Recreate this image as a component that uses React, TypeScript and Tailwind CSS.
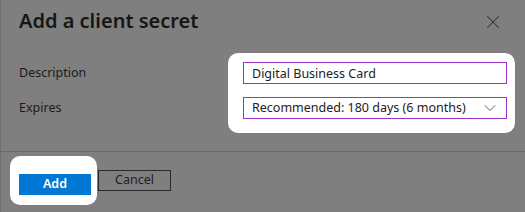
import { X, ChevronDown } from 'lucide-react';

export default function App() {
  return (
    <div
      className="w-[525px] h-[212px] overflow-hidden bg-[#7f7f7f] border-l border-[#6f6f6f] text-[#1b1b1b]"
      style={{ fontFamily: '"Noto Sans", "Open Sans", sans-serif' }}
    >
      <div className="flex items-start justify-between pl-[18px] pr-[21px] pt-[7px]">
        <h2 className="text-[20px] leading-[28px] font-semibold text-[#161616]">Add a client secret</h2>
        <button className="mt-[4px] text-[#333]" aria-label="Close">
          <X size={22} strokeWidth={1.1} />
        </button>
      </div>

      <div className="mt-[27px] grid grid-cols-[224px_264px] gap-y-[13px] pl-[18px]">
        <label className="flex h-[22px] items-center text-[12.5px]">Description</label>
        <div className="relative row-span-2 flex flex-col gap-[13px]">
          <div className="absolute -left-[15px] -right-[8px] -top-[9px] -bottom-[14px] rounded-[10px] bg-white" />
          <input
            readOnly
            value="Digital Business Card"
            className="relative h-[22px] w-full border border-[#9a32c8] bg-white px-[8px] text-[12.5px] text-[#222] outline-none"
          />
          <div className="relative flex h-[22px] items-center justify-between border border-[#9a32c8] bg-white pl-[8px] pr-[6px] text-[12.5px] text-[#222]">
            <span>Recommended: 180 days (6 months)</span>
            <ChevronDown size={20} strokeWidth={1} className="text-[#444]" />
          </div>
        </div>
        <label className="flex h-[22px] items-center text-[12.5px]">Expires</label>
      </div>

      <div className="mt-[32px] h-px bg-[#6b6b6b]" />

      <div className="flex gap-[7px] pl-[18px] pt-[18px]">
        <div className="relative">
          <div className="absolute -left-[9px] -right-[6px] -top-[14px] -bottom-[10px] rounded-[10px] bg-white" />
          <button className="relative h-[21px] w-[72px] bg-[#0078d4] text-[12.5px] font-semibold text-white">Add</button>
        </div>
        <button className="h-[21px] w-[73px] border border-[#2a2a2a] text-[12.5px] text-[#1f1f1f]">Cancel</button>
      </div>
    </div>
  );
}
